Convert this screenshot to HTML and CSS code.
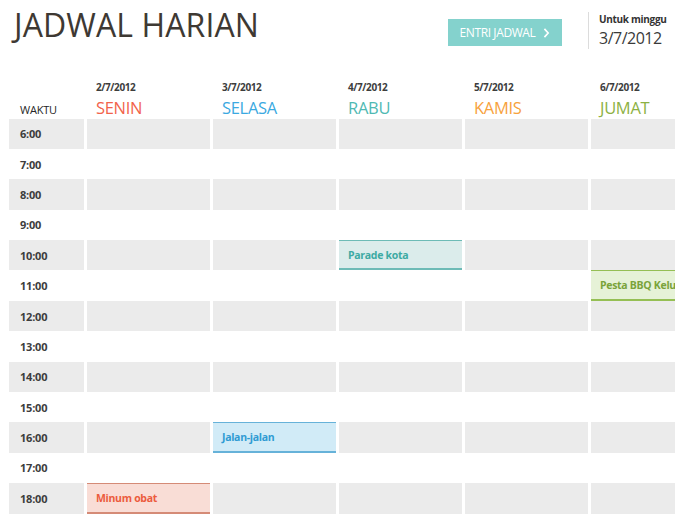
FILE: index.html
```
<!DOCTYPE html>
<html lang="id">
<head>
    <meta charset="UTF-8">
    <meta name="viewport" content="width=device-width, initial-scale=1.0">
    <title>Jadwal Harian</title>
    <link rel="stylesheet" href="styles.css">
</head>
<body>
    <div class="header">
        <h1 class="title">JADWAL HARIAN</h1>
        <button class="entry-btn">
            <span>ENTRI JADWAL</span>
            <svg class="chev" viewBox="0 0 8 12" width="7" height="10">
                <path d="M1.5 1 L6 6 L1.5 11" fill="none" stroke="white" stroke-width="2"/>
            </svg>
        </button>
        <div class="week">
            <div class="week-label">Untuk minggu</div>
            <div class="week-date">3/7/2012</div>
        </div>
    </div>

    <div class="schedule">
        <div class="row head">
            <div class="cell time"><span class="waktu">WAKTU</span></div>
            <div class="cell day"><span class="date">2/7/2012</span><span class="dayname senin">SENIN</span></div>
            <div class="cell day"><span class="date">3/7/2012</span><span class="dayname selasa">SELASA</span></div>
            <div class="cell day"><span class="date">4/7/2012</span><span class="dayname rabu">RABU</span></div>
            <div class="cell day"><span class="date">5/7/2012</span><span class="dayname kamis">KAMIS</span></div>
            <div class="cell day"><span class="date">6/7/2012</span><span class="dayname jumat">JUMAT</span></div>
        </div>

        <div class="row alt">
            <div class="cell time">6:00</div>
            <div class="cell"></div><div class="cell"></div><div class="cell"></div><div class="cell"></div><div class="cell"></div>
        </div>
        <div class="row">
            <div class="cell time">7:00</div>
            <div class="cell"></div><div class="cell"></div><div class="cell"></div><div class="cell"></div><div class="cell"></div>
        </div>
        <div class="row alt">
            <div class="cell time">8:00</div>
            <div class="cell"></div><div class="cell"></div><div class="cell"></div><div class="cell"></div><div class="cell"></div>
        </div>
        <div class="row">
            <div class="cell time">9:00</div>
            <div class="cell"></div><div class="cell"></div><div class="cell"></div><div class="cell"></div><div class="cell"></div>
        </div>
        <div class="row alt">
            <div class="cell time">10:00</div>
            <div class="cell"></div><div class="cell"></div>
            <div class="cell event teal">Parade kota</div>
            <div class="cell"></div><div class="cell"></div>
        </div>
        <div class="row">
            <div class="cell time">11:00</div>
            <div class="cell"></div><div class="cell"></div><div class="cell"></div><div class="cell"></div>
            <div class="cell event green">Pesta BBQ Keluarga</div>
        </div>
        <div class="row alt">
            <div class="cell time">12:00</div>
            <div class="cell"></div><div class="cell"></div><div class="cell"></div><div class="cell"></div><div class="cell"></div>
        </div>
        <div class="row">
            <div class="cell time">13:00</div>
            <div class="cell"></div><div class="cell"></div><div class="cell"></div><div class="cell"></div><div class="cell"></div>
        </div>
        <div class="row alt">
            <div class="cell time">14:00</div>
            <div class="cell"></div><div class="cell"></div><div class="cell"></div><div class="cell"></div><div class="cell"></div>
        </div>
        <div class="row">
            <div class="cell time">15:00</div>
            <div class="cell"></div><div class="cell"></div><div class="cell"></div><div class="cell"></div><div class="cell"></div>
        </div>
        <div class="row alt">
            <div class="cell time">16:00</div>
            <div class="cell"></div>
            <div class="cell event blue">Jalan-jalan</div>
            <div class="cell"></div><div class="cell"></div><div class="cell"></div>
        </div>
        <div class="row">
            <div class="cell time">17:00</div>
            <div class="cell"></div><div class="cell"></div><div class="cell"></div><div class="cell"></div><div class="cell"></div>
        </div>
        <div class="row alt">
            <div class="cell time">18:00</div>
            <div class="cell event red">Minum obat</div>
            <div class="cell"></div><div class="cell"></div><div class="cell"></div><div class="cell"></div>
        </div>
    </div>
</body>
</html>
```

FILE: styles.css
```
body {
    margin: 0;
    padding: 0 0 0 9px;
    font-family: "Open Sans", "Noto Sans", sans-serif;
    color: #3a3a3a;
    background: #ffffff;
    overflow: hidden;
    width: 800px;
}

.header {
    display: flex;
    align-items: flex-start;
    height: 80px;
}

.title {
    margin: 3px 0 0 5px;
    font-size: 32px;
    font-weight: 400;
    color: #3e3933;
    letter-spacing: 0.1px;
    width: 434px;
}

.entry-btn {
    margin-top: 19px;
    width: 114px;
    height: 27px;
    border: none;
    background: #84d2cd;
    color: white;
    font-family: inherit;
    font-size: 12px;
    letter-spacing: -0.4px;
    display: flex;
    align-items: center;
    justify-content: center;
    gap: 8px;
    padding: 0;
}

.week {
    margin: 12px 0 0 26px;
    padding-left: 10px;
    border-left: 1px solid #dcdcdc;
    height: 37px;
}

.week-label {
    font-size: 10px;
    font-weight: 700;
    letter-spacing: -0.3px;
    color: #333;
}

.week-date {
    font-size: 16px;
    letter-spacing: -0.5px;
    margin-top: 1px;
    color: #3a3a3a;
}

.schedule {
    display: flex;
    flex-direction: column;
}

.row {
    display: flex;
    gap: 3px;
    height: 30.4px;
}

.row.head {
    height: 38.5px;
}

.cell {
    width: 123px;
    flex: none;
    box-sizing: border-box;
}

.cell.time {
    width: 75px;
    padding-left: 11px;
    font-size: 11px;
    font-weight: 700;
    letter-spacing: -0.2px;
    display: flex;
    align-items: center;
    color: #3d3d3d;
}

.row.alt .cell {
    background: #ebebeb;
}

.head .cell.time {
    align-items: flex-end;
    padding-bottom: 2px;
}

.waktu {
    font-weight: 400;
    font-size: 11px;
    color: #262626;
}

.day {
    display: flex;
    flex-direction: column;
    padding-left: 9px;
}

.date {
    font-size: 10px;
    font-weight: 700;
    letter-spacing: -0.4px;
    color: #3d3d3d;
}

.dayname {
    font-size: 16.5px;
    line-height: 22px;
    margin-top: 3px;
    letter-spacing: -0.3px;
}

.senin { color: #f2634b; }
.selasa { color: #3ba9e1; }
.rabu { color: #4fb9b3; }
.kamis { color: #f7a23d; }
.jumat { color: #8db143; }

.event {
    display: flex;
    align-items: center;
    padding-left: 9px;
    font-size: 10.5px;
    font-weight: 700;
    letter-spacing: -0.3px;
    white-space: nowrap;
    overflow: hidden;
    border-top: 1px solid;
    border-bottom: 2px solid;
}

.row.alt .event.teal, .event.teal {
    background: #dbeceb;
    color: #3daaa3;
    border-color: #6dbbb6;
}

.row.alt .event.blue, .event.blue {
    background: #d1ebf7;
    color: #2f9bd3;
    border-color: #66b2d9;
}

.row.alt .event.red, .event.red {
    background: #f9ddd6;
    color: #ec5b3d;
    border-color: #d58b77;
}

.row.alt .event.green, .event.green {
    background: #e6f2d7;
    color: #7aa33a;
    border-color: #95bf54;
}
```
